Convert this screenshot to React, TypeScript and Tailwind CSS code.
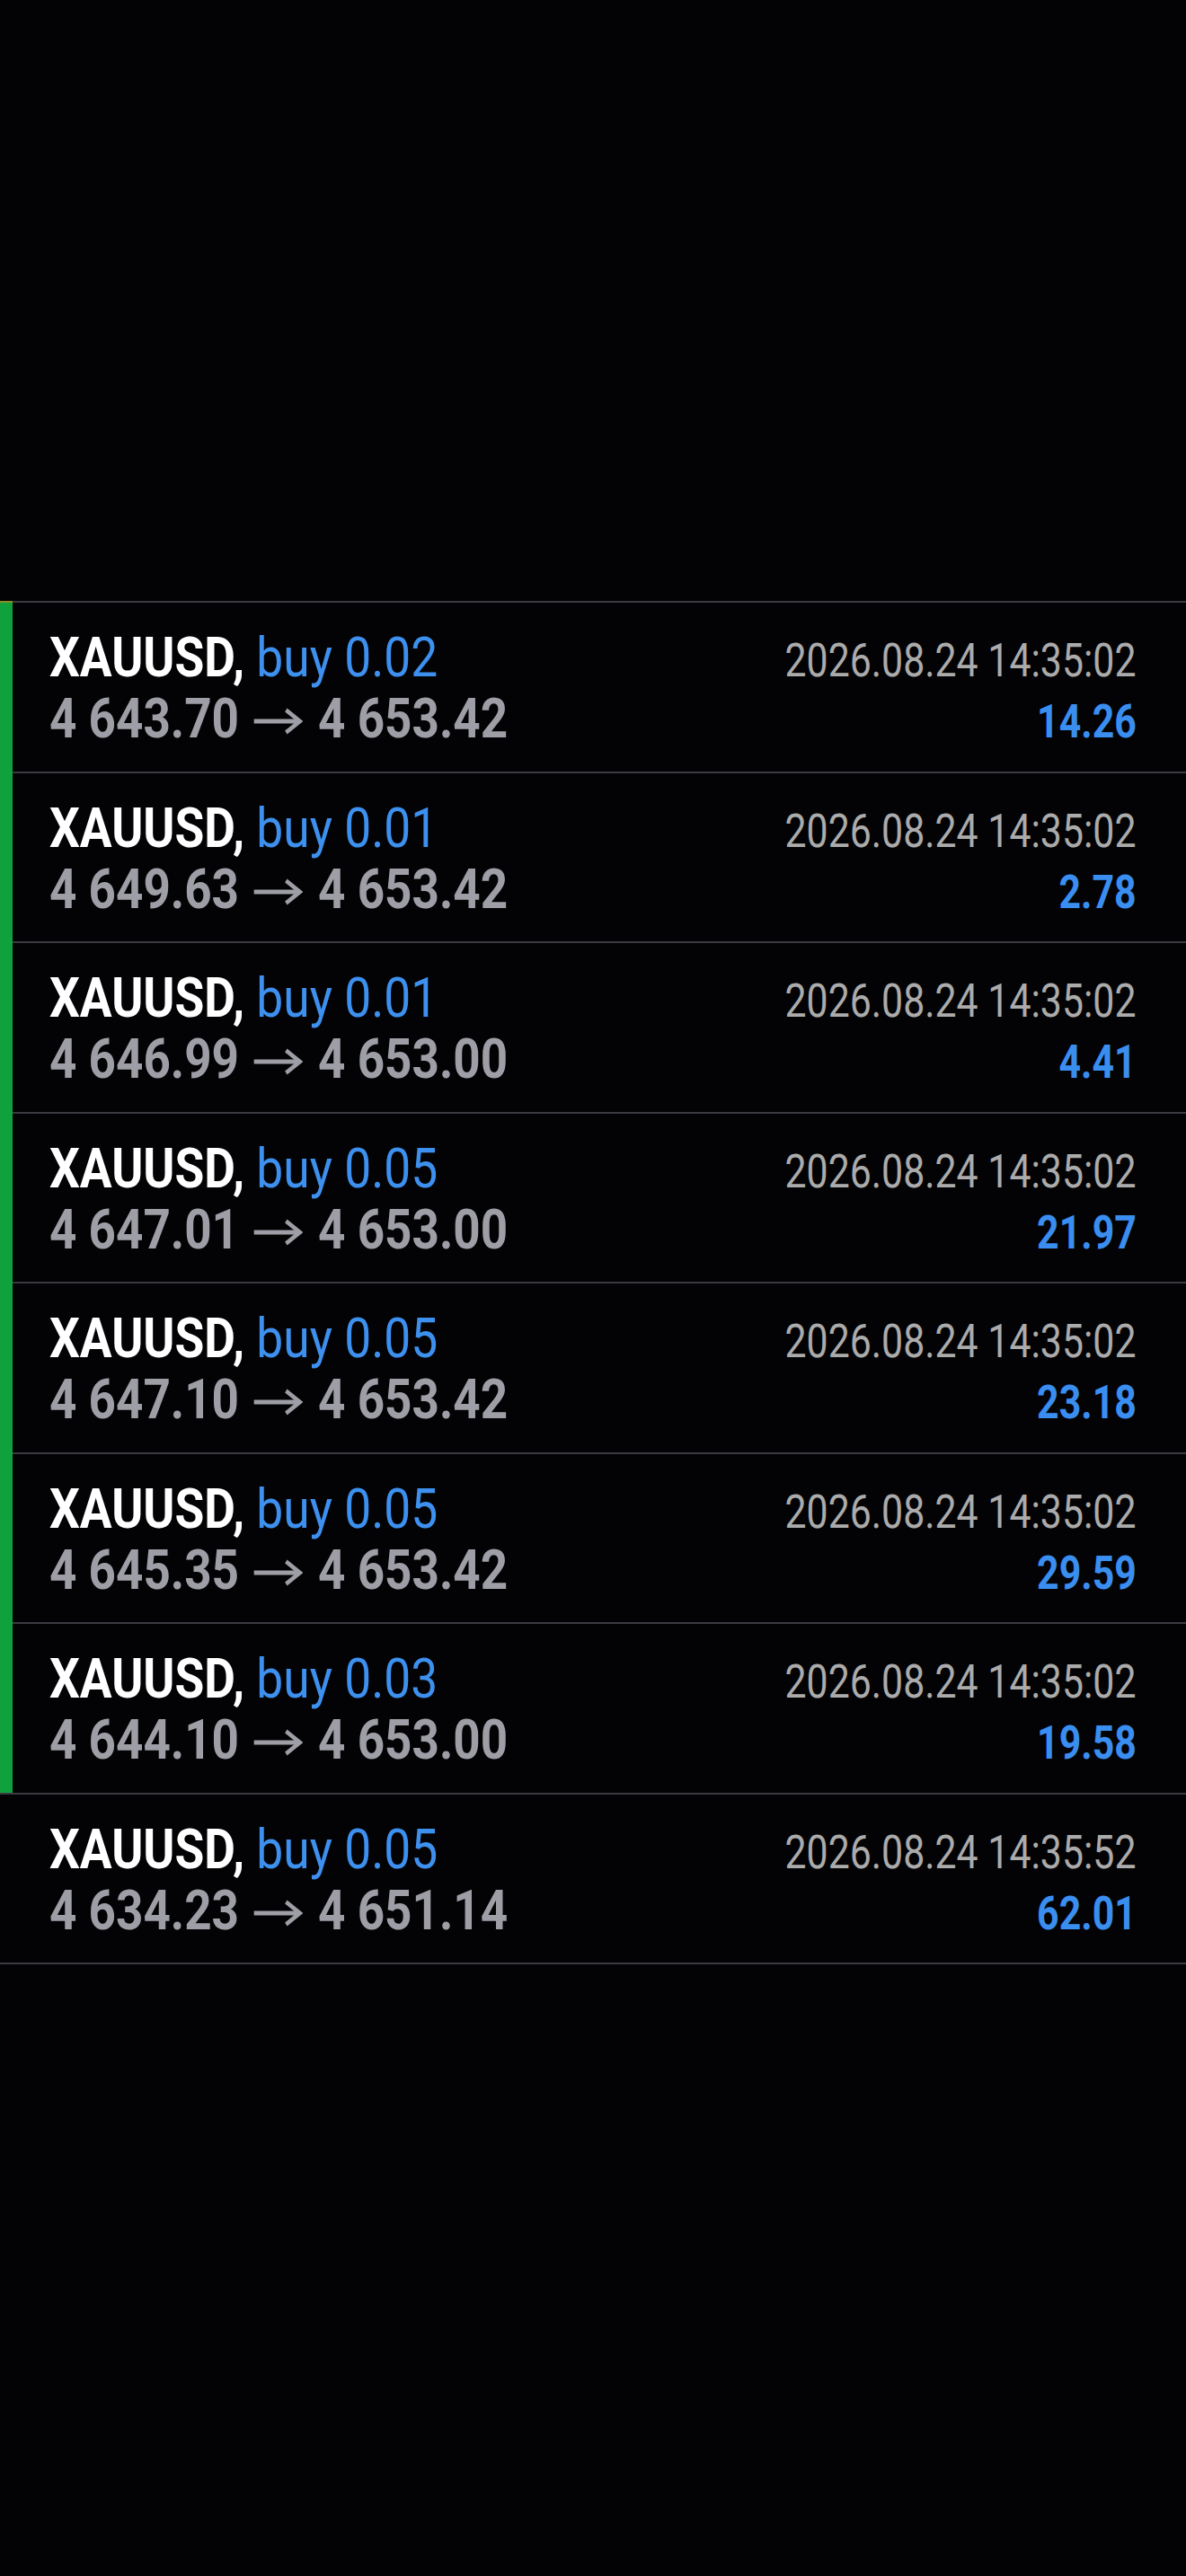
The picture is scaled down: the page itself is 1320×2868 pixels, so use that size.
// Trade history list — closed XAUUSD positions (dark theme)

import React from "react";

interface Deal {
  lot: string;
  open: string;
  close: string;
  time: string;
  profit: string;
  marked: boolean;
}

const deals: Deal[] = [
  { lot: "0.02", open: "4 643.70", close: "4 653.42", time: "2026.08.24 14:35:02", profit: "14.26", marked: true },
  { lot: "0.01", open: "4 649.63", close: "4 653.42", time: "2026.08.24 14:35:02", profit: "2.78", marked: true },
  { lot: "0.01", open: "4 646.99", close: "4 653.00", time: "2026.08.24 14:35:02", profit: "4.41", marked: true },
  { lot: "0.05", open: "4 647.01", close: "4 653.00", time: "2026.08.24 14:35:02", profit: "21.97", marked: true },
  { lot: "0.05", open: "4 647.10", close: "4 653.42", time: "2026.08.24 14:35:02", profit: "23.18", marked: true },
  { lot: "0.05", open: "4 645.35", close: "4 653.42", time: "2026.08.24 14:35:02", profit: "29.59", marked: true },
  { lot: "0.03", open: "4 644.10", close: "4 653.00", time: "2026.08.24 14:35:02", profit: "19.58", marked: true },
  { lot: "0.05", open: "4 634.23", close: "4 651.14", time: "2026.08.24 14:35:52", profit: "62.01", marked: false },
];

// long arrow between open and close price
const Arrow = () => (
  <svg
    width="64"
    height="30"
    viewBox="0 0 64 30"
    className="ml-[19px] mr-[20px] inline-block align-[3px]"
    fill="none"
    stroke="#9e9ea6"
    strokeWidth="5"
  >
    <path d="M0 15 H60" />
    <path d="M42 2.5 L60 15 L42 27.5" strokeLinejoin="miter" />
  </svg>
);

const DealRow: React.FC<{ deal: Deal; first: boolean; last: boolean }> = ({ deal, first, last }) => {
  return (
    <div className={`flex ${last ? "border-b-2 border-[#3b3a40]" : ""}`}>
      <div
        className={`w-[14px] shrink-0 ${
          deal.marked
            ? `bg-[#0fa23c] ${first ? "border-t-2 border-[#8c8a24]" : ""}`
            : "border-t-2 border-[#3b3a40]"
        }`}
      />
      <div className="flex-1 border-t-2 border-[#3b3a40] pl-[41px] pr-[55px] pt-[27px] pb-[24.5px]">
        <div className="flex h-[68px] items-baseline justify-between leading-[68px] whitespace-nowrap">
          <span className="origin-left scale-x-[0.86] text-[62px] font-bold text-white">
            XAUUSD, <span className="font-normal text-[#3d90ee]">buy {deal.lot}</span>
          </span>
          <span className="origin-right scale-x-[0.84] text-[51px] text-[#ababab]">{deal.time}</span>
        </div>
        <div className="flex h-[68px] items-baseline justify-between leading-[68px] whitespace-nowrap">
          <span className="origin-left scale-x-[0.855] text-[62px] font-bold text-[#9e9ea6]">
            {deal.open}
            <Arrow />
            {deal.close}
          </span>
          <span className="origin-right scale-x-[0.84] text-[51px] font-bold text-[#3a8ef0]">{deal.profit}</span>
        </div>
      </div>
    </div>
  );
};

export default function App() {
  return (
    <div className="min-h-screen bg-[#030305] pt-[669px] font-['Roboto',sans-serif]">
      {deals.map((d, i) => (
        <DealRow key={i} deal={d} first={i === 0} last={i === deals.length - 1} />
      ))}
    </div>
  );
}
